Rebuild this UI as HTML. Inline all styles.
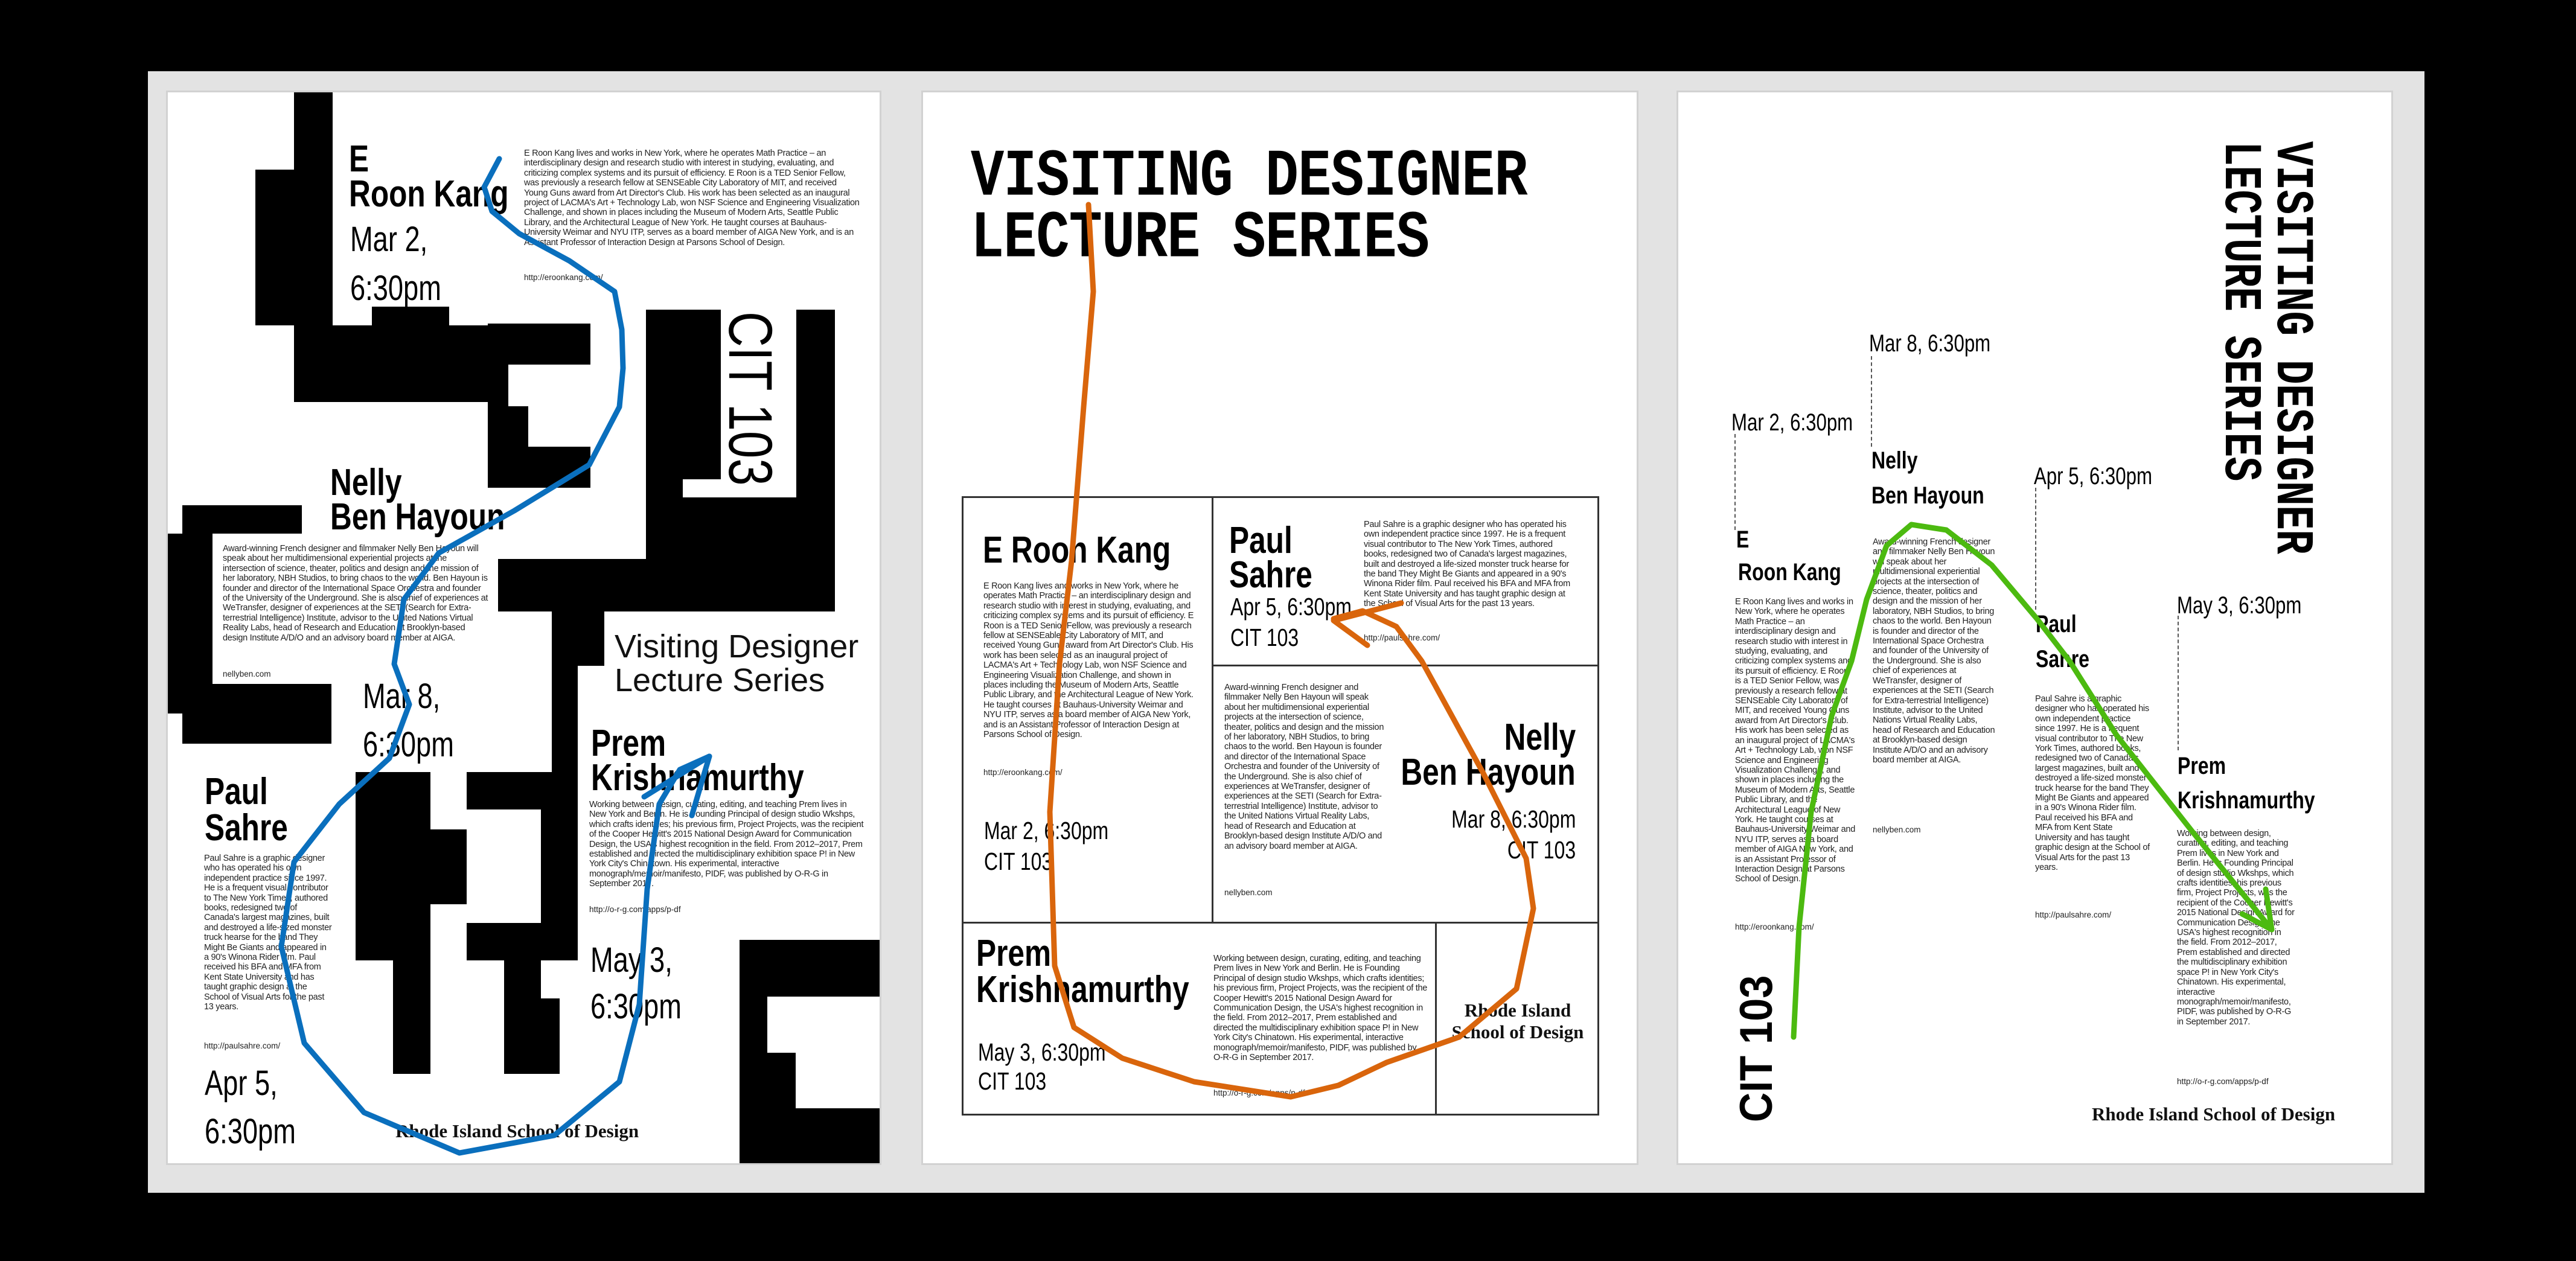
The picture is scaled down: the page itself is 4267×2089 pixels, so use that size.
<!DOCTYPE html>
<html><head><meta charset="utf-8"><style>
*{margin:0;padding:0;box-sizing:border-box}
body{width:4267px;height:2089px;background:#000;position:relative;overflow:hidden;font-family:"Liberation Sans",sans-serif}
.a{position:absolute}
.panel{left:245px;top:118px;width:3771px;height:1858px;background:#e3e3e3}
.poster{background:#fff;border:3px solid #d2d2d2;top:150px;height:1780px}
.b{position:absolute;background:#000}
.w{position:absolute;background:#fff}
.n{position:absolute;font-family:"Liberation Sans",sans-serif;font-weight:bold;font-size:62px;line-height:1;color:#000;white-space:nowrap;transform:scaleX(.8);transform-origin:0 0}
.d{position:absolute;font-family:"Liberation Sans",sans-serif;font-size:58px;line-height:1;color:#000;white-space:nowrap;transform:scaleX(.78);transform-origin:0 0}
.rt{transform-origin:100% 0}
.s{font-size:40px}
.m{font-size:41px}
.p{position:absolute;font-family:"Liberation Sans",sans-serif;font-size:14.5px;line-height:16.4px;color:#222;letter-spacing:-0.3px}
.u{position:absolute;font-family:"Liberation Sans",sans-serif;font-size:13.5px;line-height:16.5px;color:#222}
.r{position:absolute;font-family:"Liberation Serif",serif;font-weight:bold;font-size:31px;line-height:1;color:#111;white-space:nowrap}
.px{position:absolute;font-family:"Liberation Mono",monospace;font-weight:bold;color:#000;white-space:nowrap;transform-origin:0 0}
.dash{position:absolute;width:0;border-left:2px dashed #555}
.cell{position:absolute;border:3px solid #333}
</style></head><body>
<div class="a panel"></div>

<!-- POSTER 1 -->
<div class="a poster" style="left:275px;width:1185px"></div>
<div class="b" style="left:487px;top:153px;width:64px;height:387px"></div>
<div class="b" style="left:423px;top:281px;width:64px;height:258px"></div>
<div class="b" style="left:487px;top:539px;width:321px;height:127px"></div>
<div class="b" style="left:616px;top:508px;width:128px;height:31px"></div>
<div class="b" style="left:808px;top:536px;width:170px;height:68px"></div>
<div class="b" style="left:808px;top:604px;width:34px;height:69px"></div>
<div class="b" style="left:808px;top:673px;width:67px;height:67px"></div>
<div class="b" style="left:808px;top:740px;width:170px;height:68px"></div>
<div class="b" style="left:1070px;top:513px;width:313px;height:500px"></div>
<div class="w" style="left:1194px;top:513px;width:125px;height:311px"></div>
<div class="w" style="left:1131px;top:794px;width:63px;height:30px"></div>
<div class="b" style="left:825px;top:926px;width:259px;height:87px"></div>
<div class="b" style="left:914px;top:1013px;width:87px;height:90px"></div>
<div class="b" style="left:914px;top:1090px;width:43px;height:189px"></div>
<div class="b" style="left:302px;top:837px;width:198px;height:47px"></div>
<div class="b" style="left:278px;top:884px;width:74px;height:249px"></div>
<div class="w" style="left:352px;top:884px;width:460px;height:249px"></div>
<div class="b" style="left:278px;top:1133px;width:271px;height:49px"></div>
<div class="b" style="left:302px;top:1182px;width:247px;height:50px"></div>
<div class="b" style="left:773px;top:1279px;width:184px;height:62px"></div>
<div class="b" style="left:896px;top:1341px;width:61px;height:250px"></div>
<div class="b" style="left:773px;top:1529px;width:184px;height:62px"></div>
<div class="b" style="left:835px;top:1591px;width:61px;height:188px"></div>
<div class="b" style="left:835px;top:1654px;width:92px;height:125px"></div>
<div class="b" style="left:589px;top:1279px;width:124px;height:312px"></div>
<div class="b" style="left:713px;top:1374px;width:60px;height:124px"></div>
<div class="b" style="left:651px;top:1591px;width:62px;height:188px"></div>
<div class="b" style="left:1225px;top:1557px;width:232px;height:370px"></div>
<div class="w" style="left:1271px;top:1651px;width:186px;height:93px"></div>
<div class="w" style="left:1318px;top:1744px;width:139px;height:92px"></div>

<div class="n" style="left:578px;top:233px">E</div>
<div class="n" style="left:578px;top:291px">Roon Kang</div>
<div class="d" style="left:580px;top:368px">Mar 2,</div>
<div class="d" style="left:580px;top:449px">6:30pm</div>
<div class="p" style="left:868px;top:246px;width:560px">E Roon Kang lives and works in New York, where he operates Math Practice – an interdisciplinary design and research studio with interest in studying, evaluating, and criticizing complex systems and its pursuit of efficiency. E Roon is a TED Senior Fellow, was previously a research fellow at SENSEable City Laboratory of MIT, and received Young Guns award from Art Director's Club. His work has been selected as an inaugural project of LACMA's Art + Technology Lab, won NSF Science and Engineering Visualization Challenge, and shown in places including the Museum of Modern Arts, Seattle Public Library, and the Architectural League of New York. He taught courses at Bauhaus-University Weimar and NYU ITP, serves as a board member of AIGA New York, and is an Assistant Professor of Interaction Design at Parsons School of Design.</div>
<div class="u" style="left:868px;top:452px">http://eroonkang.com/</div>
<div class="a" style="left:1294px;top:516px;font-size:102px;line-height:1;white-space:nowrap;transform:rotate(90deg) scaleX(.8);transform-origin:0 0">CIT 103</div>
<div class="n" style="left:547px;top:769px">Nelly</div>
<div class="n" style="left:547px;top:826px">Ben Hayoun</div>
<div class="p" style="left:369px;top:901px;width:440px">Award-winning French designer and filmmaker Nelly Ben Hayoun will speak about her multidimensional experiential projects at the intersection of science, theater, politics and design and the mission of her laboratory, NBH Studios, to bring chaos to the world. Ben Hayoun is founder and director of the International Space Orchestra and founder of the University of the Underground. She is also chief of experiences at WeTransfer, designer of experiences at the SETI (Search for Extra-terrestrial Intelligence) Institute, advisor to the United Nations Virtual Reality Labs, head of Research and Education at Brooklyn-based design Institute A/D/O and an advisory board member at AIGA.</div>
<div class="u" style="left:369px;top:1109px">nellyben.com</div>
<div class="a" style="left:1018px;top:1043px;font-size:54px;line-height:56px;color:#111;white-space:nowrap">Visiting Designer<br>Lecture Series</div>
<div class="d" style="left:601px;top:1125px">Mar 8,</div>
<div class="d" style="left:601px;top:1205px">6:30pm</div>
<div class="n" style="left:339px;top:1281px">Paul</div>
<div class="n" style="left:339px;top:1341px">Sahre</div>
<div class="p" style="left:338px;top:1414px;width:212px">Paul Sahre is a graphic designer who has operated his own independent practice since 1997. He is a frequent visual contributor to The New York Times, authored books, redesigned two of Canada's largest magazines, built and destroyed a life-sized monster truck hearse for the band They Might Be Giants and appeared in a 90's Winona Rider film. Paul received his BFA and MFA from Kent State University and has taught graphic design at the School of Visual Arts for the past 13 years.</div>
<div class="u" style="left:338px;top:1725px">http://paulsahre.com/</div>
<div class="d" style="left:339px;top:1766px">Apr 5,</div>
<div class="d" style="left:339px;top:1846px">6:30pm</div>
<div class="n" style="left:979px;top:1201px">Prem</div>
<div class="n" style="left:979px;top:1258px">Krishnamurthy</div>
<div class="p" style="left:976px;top:1325px;width:455px">Working between design, curating, editing, and teaching Prem lives in New York and Berlin. He is Founding Principal of design studio Wkshps, which crafts identities; his previous firm, Project Projects, was the recipient of the Cooper Hewitt's 2015 National Design Award for Communication Design, the USA's highest recognition in the field. From 2012–2017, Prem established and directed the multidisciplinary exhibition space P! in New York City's Chinatown. His experimental, interactive monograph/memoir/manifesto, PIDF, was published by O-R-G in September 2017.</div>
<div class="u" style="left:976px;top:1499px">http://o-r-g.com/apps/p-df</div>
<div class="d" style="left:978px;top:1562px">May 3,</div>
<div class="d" style="left:978px;top:1639px">6:30pm</div>
<div class="r" style="left:655px;top:1858px">Rhode Island School of Design</div>

<!-- POSTER 2 -->
<div class="a poster" style="left:1526px;width:1188px"></div>
<div class="px" style="left:1608px;top:242px;font-size:92px;line-height:85px;transform:scaleY(1.2);letter-spacing:-1px">VISITING DESIGNER<br>LECTURE SERIES</div>
<div class="cell" style="left:1593px;top:822px;width:1056px;height:1026px"></div>
<div class="a" style="left:2007px;top:822px;width:3px;height:708px;background:#333"></div>
<div class="a" style="left:2007px;top:1101px;width:642px;height:3px;background:#333"></div>
<div class="a" style="left:1593px;top:1527px;width:1056px;height:3px;background:#333"></div>
<div class="a" style="left:2377px;top:1527px;width:3px;height:320px;background:#333"></div>
<div class="n" style="left:1628px;top:881px">E Roon Kang</div>
<div class="p" style="left:1629px;top:963px;width:350px">E Roon Kang lives and works in New York, where he operates Math Practice – an interdisciplinary design and research studio with interest in studying, evaluating, and criticizing complex systems and its pursuit of efficiency. E Roon is a TED Senior Fellow, was previously a research fellow at SENSEable City Laboratory of MIT, and received Young Guns award from Art Director's Club. His work has been selected as an inaugural project of LACMA's Art + Technology Lab, won NSF Science and Engineering Visualization Challenge, and shown in places including the Museum of Modern Arts, Seattle Public Library, and the Architectural League of New York. He taught courses at Bauhaus-University Weimar and NYU ITP, serves as a board member of AIGA New York, and is an Assistant Professor of Interaction Design at Parsons School of Design.</div>
<div class="u" style="left:1629px;top:1272px">http://eroonkang.com/</div>
<div class="d m" style="left:1630px;top:1356px">Mar 2, 6:30pm</div>
<div class="d m" style="left:1630px;top:1407px">CIT 103</div>
<div class="n" style="left:2036px;top:865px">Paul</div>
<div class="n" style="left:2036px;top:922px">Sahre</div>
<div class="d m" style="left:2038px;top:985px">Apr 5, 6:30pm</div>
<div class="d m" style="left:2038px;top:1036px">CIT 103</div>
<div class="p" style="left:2259px;top:861px;width:355px">Paul Sahre is a graphic designer who has operated his own independent practice since 1997. He is a frequent visual contributor to The New York Times, authored books, redesigned two of Canada's largest magazines, built and destroyed a life-sized monster truck hearse for the band They Might Be Giants and appeared in a 90's Winona Rider film. Paul received his BFA and MFA from Kent State University and has taught graphic design at the School of Visual Arts for the past 13 years.</div>
<div class="u" style="left:2259px;top:1049px">http://paulsahre.com/</div>
<div class="p" style="left:2028px;top:1131px;width:265px">Award-winning French designer and filmmaker Nelly Ben Hayoun will speak about her multidimensional experiential projects at the intersection of science, theater, politics and design and the mission of her laboratory, NBH Studios, to bring chaos to the world. Ben Hayoun is founder and director of the International Space Orchestra and founder of the University of the Underground. She is also chief of experiences at WeTransfer, designer of experiences at the SETI (Search for Extra-terrestrial Intelligence) Institute, advisor to the United Nations Virtual Reality Labs, head of Research and Education at Brooklyn-based design Institute A/D/O and an advisory board member at AIGA.</div>
<div class="u" style="left:2028px;top:1471px">nellyben.com</div>
<div class="n rt" style="right:1657px;top:1191px;text-align:right">Nelly</div>
<div class="n rt" style="right:1657px;top:1249px;text-align:right">Ben Hayoun</div>
<div class="d m rt" style="right:1657px;top:1337px">Mar 8, 6:30pm</div>
<div class="d m rt" style="right:1657px;top:1388px">CIT 103</div>
<div class="n" style="left:1617px;top:1549px">Prem</div>
<div class="n" style="left:1617px;top:1609px">Krishnamurthy</div>
<div class="d m" style="left:1620px;top:1723px">May 3, 6:30pm</div>
<div class="d m" style="left:1620px;top:1771px">CIT 103</div>
<div class="p" style="left:2010px;top:1580px;width:355px">Working between design, curating, editing, and teaching Prem lives in New York and Berlin. He is Founding Principal of design studio Wkshps, which crafts identities; his previous firm, Project Projects, was the recipient of the Cooper Hewitt's 2015 National Design Award for Communication Design, the USA's highest recognition in the field. From 2012–2017, Prem established and directed the multidisciplinary exhibition space P! in New York City's Chinatown. His experimental, interactive monograph/memoir/manifesto, PIDF, was published by O-R-G in September 2017.</div>
<div class="u" style="left:2010px;top:1803px">http://o-r-g.com/apps/p-df</div>
<div class="r" style="left:2380px;top:1656px;width:268px;text-align:center;line-height:36px">Rhode Island<br>School of Design</div>

<!-- POSTER 3 -->
<div class="a poster" style="left:2777px;width:1187px"></div>
<div class="px" style="left:3839px;top:234px;font-size:68px;line-height:67px;transform:rotate(90deg) scaleY(1.29);letter-spacing:-0.6px">VISITING DESIGNER<br>LECTURE SERIES</div>
<div class="d s" style="left:2868px;top:680px">Mar 2, 6:30pm</div>
<div class="dash" style="left:2873px;top:719px;height:159px"></div>
<div class="n s" style="left:2876px;top:874px">E</div>
<div class="n s" style="left:2879px;top:928px">Roon Kang</div>
<div class="p" style="left:2874px;top:989px;width:200px">E Roon Kang lives and works in New York, where he operates Math Practice – an interdisciplinary design and research studio with interest in studying, evaluating, and criticizing complex systems and its pursuit of efficiency. E Roon is a TED Senior Fellow, was previously a research fellow at SENSEable City Laboratory of MIT, and received Young Guns award from Art Director's Club. His work has been selected as an inaugural project of LACMA's Art + Technology Lab, won NSF Science and Engineering Visualization Challenge, and shown in places including the Museum of Modern Arts, Seattle Public Library, and the Architectural League of New York. He taught courses at Bauhaus-University Weimar and NYU ITP, serves as a board member of AIGA New York, and is an Assistant Professor of Interaction Design at Parsons School of Design.</div>
<div class="u" style="left:2874px;top:1528px">http://eroonkang.com/</div>
<div class="d s" style="left:3096px;top:549px">Mar 8, 6:30pm</div>
<div class="dash" style="left:3099px;top:590px;height:150px"></div>
<div class="n s" style="left:3100px;top:743px">Nelly</div>
<div class="n s" style="left:3100px;top:801px">Ben Hayoun</div>
<div class="p" style="left:3102px;top:890px;width:205px">Award-winning French designer and filmmaker Nelly Ben Hayoun will speak about her multidimensional experiential projects at the intersection of science, theater, politics and design and the mission of her laboratory, NBH Studios, to bring chaos to the world. Ben Hayoun is founder and director of the International Space Orchestra and founder of the University of the Underground. She is also chief of experiences at WeTransfer, designer of experiences at the SETI (Search for Extra-terrestrial Intelligence) Institute, advisor to the United Nations Virtual Reality Labs, head of Research and Education at Brooklyn-based design Institute A/D/O and an advisory board member at AIGA.</div>
<div class="u" style="left:3102px;top:1367px">nellyben.com</div>
<div class="d s" style="left:3369px;top:769px">Apr 5, 6:30pm</div>
<div class="dash" style="left:3371px;top:808px;height:202px"></div>
<div class="n s" style="left:3372px;top:1014px">Paul</div>
<div class="n s" style="left:3372px;top:1072px">Sahre</div>
<div class="p" style="left:3371px;top:1150px;width:192px">Paul Sahre is a graphic designer who has operated his own independent practice since 1997. He is a frequent visual contributor to The New York Times, authored books, redesigned two of Canada's largest magazines, built and destroyed a life-sized monster truck hearse for the band They Might Be Giants and appeared in a 90's Winona Rider film. Paul received his BFA and MFA from Kent State University and has taught graphic design at the School of Visual Arts for the past 13 years.</div>
<div class="u" style="left:3371px;top:1508px">http://paulsahre.com/</div>
<div class="d s" style="left:3606px;top:983px">May 3, 6:30pm</div>
<div class="dash" style="left:3607px;top:1020px;height:223px"></div>
<div class="n s" style="left:3607px;top:1249px">Prem</div>
<div class="n s" style="left:3607px;top:1306px">Krishnamurthy</div>
<div class="p" style="left:3606px;top:1373px;width:195px">Working between design, curating, editing, and teaching Prem lives in New York and Berlin. He is Founding Principal of design studio Wkshps, which crafts identities; his previous firm, Project Projects, was the recipient of the Cooper Hewitt's 2015 National Design Award for Communication Design, the USA's highest recognition in the field. From 2012–2017, Prem established and directed the multidisciplinary exhibition space P! in New York City's Chinatown. His experimental, interactive monograph/memoir/manifesto, PIDF, was published by O-R-G in September 2017.</div>
<div class="u" style="left:3606px;top:1784px">http://o-r-g.com/apps/p-df</div>
<div class="a" style="left:2872px;top:1859px;font-size:76px;font-weight:bold;line-height:1;white-space:nowrap;transform:rotate(-90deg) scaleX(.9);transform-origin:0 0">CIT 103</div>
<div class="r" style="left:3465px;top:1830px">Rhode Island School of Design</div>

<svg class="a" style="left:0;top:0" width="4267" height="2089" fill="none" stroke-linecap="round" stroke-linejoin="round">
<polyline stroke="#0a6fbd" stroke-width="9" points="827,263 802,310 815,350 860,387 943,432 1018,483 1030,546 1032,610 1026,674 976,770 852,846 727,916 669,993 653,1100 678,1167 645,1256 562,1332 487,1428 466,1568 504,1728 603,1843 761,1910 918,1881 1026,1792 1059,1664 1072,1473 1092,1332 1126,1275 1175,1253"/>
<polyline stroke="#0a6fbd" stroke-width="9" points="1067,1320 1175,1253 1146,1351"/>
<polyline stroke="#d9650c" stroke-width="9" points="1803,339 1811,483 1795,674 1775,929 1755,1100 1739,1345 1747,1600 1779,1702 1859,1753 1978,1792 2138,1817 2217,1798 2297,1760 2417,1718 2512,1638 2540,1505 2528,1422 2457,1281 2377,1135 2355,1095 2313,1038 2257,1012 2209,1025"/>
<polyline stroke="#d9650c" stroke-width="9" points="2321,999 2209,1028 2265,1069"/>
<polyline stroke="#4cba10" stroke-width="9" points="2971,1718 2980,1536 3000,1345 3034,1186 3067,1095 3092,993 3125,904 3166,869 3224,878 3299,936 3374,1025 3428,1095 3506,1218 3631,1377 3763,1540"/>
<polyline stroke="#4cba10" stroke-width="9" points="3714,1514 3763,1540 3753,1473"/>
</svg>
</body></html>
